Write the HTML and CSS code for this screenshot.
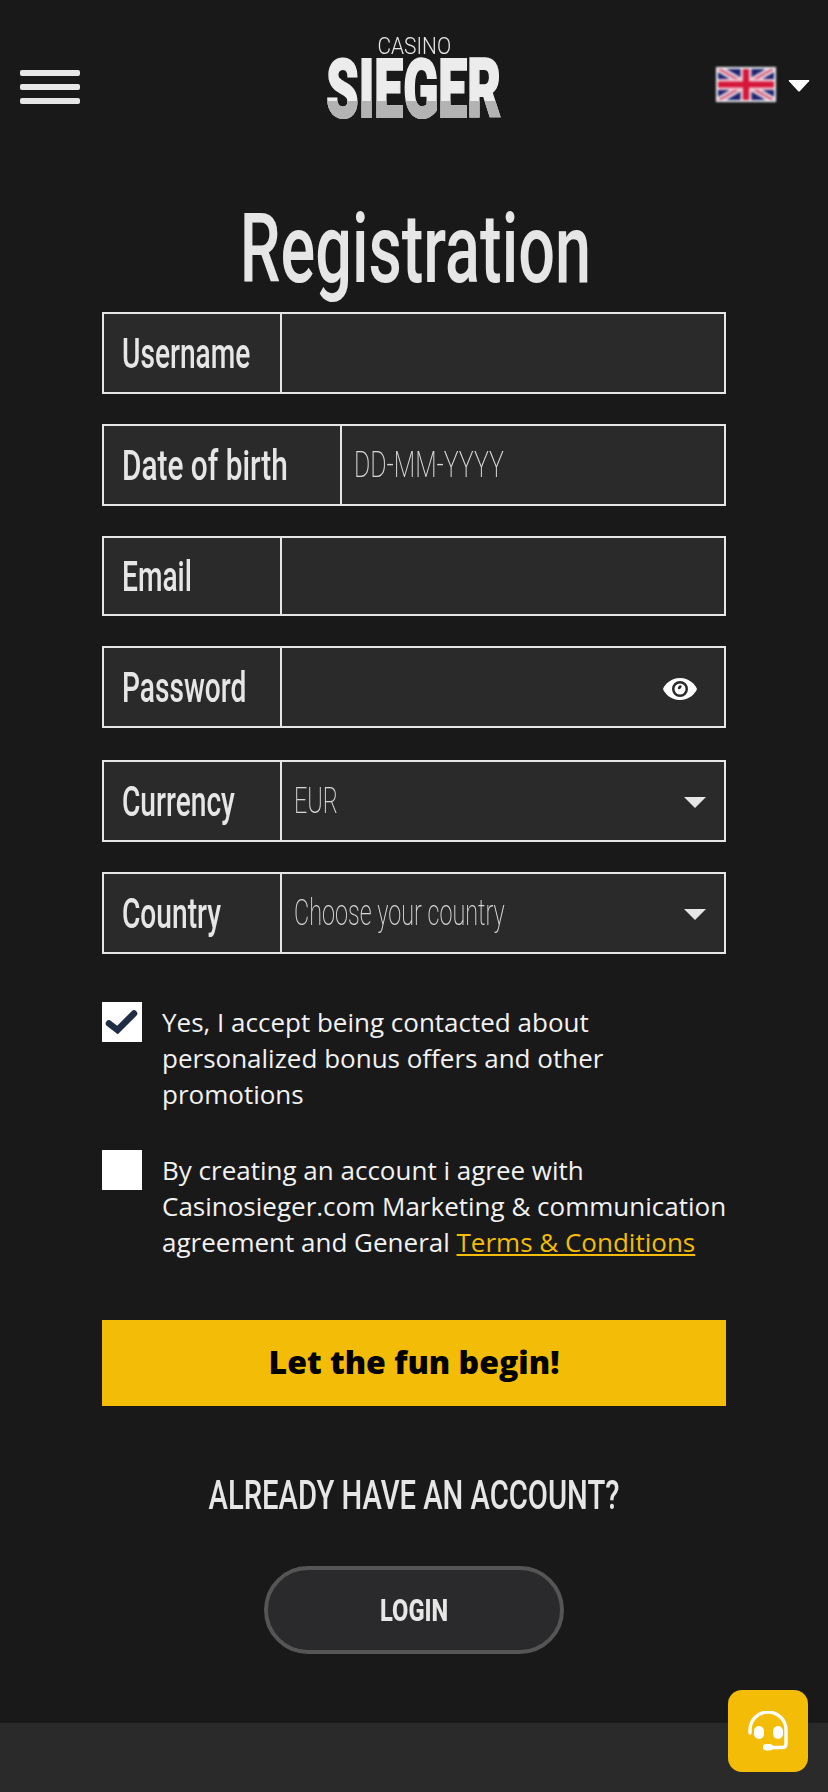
FILE: index.html
```html
<!DOCTYPE html>
<html lang="en">
<head>
<meta charset="utf-8">
<title>Casino Sieger - Registration</title>
<link rel="stylesheet" href="styles.css">
</head>
<body>
<div class="page">
  <header class="header">
    <button class="burger" aria-label="Menu"><i></i><i></i><i></i></button>
    <div class="logo">
      <span class="logo-casino">CASINO</span>
      <span class="logo-sieger" data-text="SIEGER">SIEGER</span>
    </div>
    <div class="lang">
      <svg class="flag" viewBox="0 0 60 35" width="60" height="35">
        <rect width="60" height="35" fill="#1d2470"/>
        <path d="M0 0L60 35M60 0L0 35" stroke="#ecd8e2" stroke-width="7"/>
        <path d="M0 0L60 35M60 0L0 35" stroke="#d4506e" stroke-width="2"/>
        <path d="M30 0V35M0 17.5H60" stroke="#f0c8d2" stroke-width="11"/>
        <path d="M30 0V35M0 17.5H60" stroke="#d5163a" stroke-width="6"/>
        <rect x="1" y="1" width="58" height="33" fill="none" stroke="#eef0f6" stroke-width="2"/>
      </svg>
      <svg class="caret-lang" viewBox="0 0 22 12" width="22" height="12"><path d="M1.5 0H20.5Q22 0 21 1.2L12 11Q11 12 10 11L1 1.2Q0 0 1.5 0Z" fill="#fff"/></svg>
    </div>
  </header>

  <h1 class="title">Registration</h1>

  <form class="form">
    <div class="field"><label class="field-label"><span class="squeeze">Username</span></label><input class="field-input" type="text"></div>
    <div class="field"><label class="field-label field-label-wide"><span class="squeeze squeeze-wide">Date of birth</span></label><span class="field-value"><span class="squeeze-light squeeze-date">DD-MM-YYYY</span></span></div>
    <div class="field field-short"><label class="field-label"><span class="squeeze">Email</span></label><input class="field-input" type="email"></div>
    <div class="field field-gap"><label class="field-label"><span class="squeeze">Password</span></label><input class="field-input" type="password">
      <svg class="eye" viewBox="0 0 34 22" width="34" height="22"><path fill-rule="evenodd" d="M17 0C26 0 32 6 34 11C32 16 26 22 17 22C8 22 2 16 0 11C2 6 8 0 17 0ZM17 3A8 8 0 1 0 17 19A8 8 0 1 0 17 3Z" fill="#fff"/><path fill-rule="evenodd" d="M17 5.5A5.5 5.5 0 1 0 17 16.5A5.5 5.5 0 1 0 17 5.5ZM18.5 7.5A2.8 2.8 0 0 0 15 11A2.8 2.8 0 0 0 18.5 7.5Z" fill="#fff"/></svg>
    </div>
    <div class="field"><label class="field-label"><span class="squeeze">Currency</span></label><span class="field-value"><span class="squeeze-light">EUR</span></span>
      <svg class="caret" viewBox="0 0 22 11" width="22" height="11"><path d="M0 0H22L11 11Z" fill="#e6e6e6"/></svg>
    </div>
    <div class="field"><label class="field-label"><span class="squeeze">Country</span></label><span class="field-value"><span class="squeeze-light">Choose your country</span></span>
      <svg class="caret" viewBox="0 0 22 11" width="22" height="11"><path d="M0 0H22L11 11Z" fill="#e6e6e6"/></svg>
    </div>

    <div class="checks">
      <div class="check-row">
        <span class="box"><svg viewBox="0 0 40 40" width="40" height="40"><path d="M7 21.5L15.5 28L32 11.5" fill="none" stroke="#1f2d45" stroke-width="6.5" stroke-linecap="round"/></svg></span>
        <p class="check-text">Yes, I accept being contacted about personalized bonus offers and other promotions</p>
      </div>
      <div class="check-row">
        <span class="box"></span>
        <p class="check-text">By creating an account i agree with Casinosieger.com Marketing &amp; communication agreement and General <a href="#">Terms &amp; Conditions</a></p>
      </div>
    </div>

    <button class="submit" type="button">Let the fun begin!</button>
  </form>

  <h2 class="already">ALREADY HAVE AN ACCOUNT?</h2>
  <a class="login" href="#"><span class="login-text">LOGIN</span></a>

  <footer class="footer"></footer>
  <button class="chat" aria-label="Support">
    <svg viewBox="0 0 40 40" width="40" height="40">
      <path d="M2 22V19A18 18 0 0 1 38 19V33Q38 36.5 34.5 36.5H20" fill="none" stroke="#fff" stroke-width="3.4" stroke-linecap="round"/>
      <rect x="6" y="15" width="10" height="13" rx="5" fill="#fff"/>
      <rect x="25" y="15" width="10" height="13" rx="5" fill="#fff"/>
      <rect x="15" y="33" width="10" height="6.5" rx="3.2" fill="#fff"/>
    </svg>
  </button>
</div>
</body>
</html>
```
FILE: styles.css
```css
* { box-sizing: border-box; }
html, body { margin: 0; padding: 0; }
body { background: #19191a; color: #e6e6e6; font-family: "Open Sans", sans-serif; }
.page { position: relative; width: 828px; height: 1792px; overflow: hidden; }

.header { display: grid; grid-template-columns: 1fr 172px 1fr; align-items: start; height: 199px; padding: 37px 18px 0 18px; }
.burger { display: flex; flex-direction: column; gap: 8px; width: 60px; margin: 33px 0 0 2px; padding: 0; background: none; border: 0; }
.burger i { display: block; height: 6px; background: #e6e6e6; border-radius: 2px; }

.logo { display: flex; flex-direction: column; align-items: center; width: 172px; white-space: nowrap; }
.logo-casino { display: inline-block; height: 22px; font-family: Roboto, sans-serif; font-weight: 300; font-size: 24px; line-height: 18px; color: #e6e6e6; transform: scaleX(.87); }
.logo-sieger { position: relative; display: inline-block; height: 61px; font-family: Roboto, sans-serif; font-weight: 900; font-size: 82px; line-height: 61px; color: #ececec; -webkit-text-stroke: 2px #ececec; transform: scaleX(.63); }
.logo-sieger::after { content: attr(data-text); position: absolute; left: 0; top: 0; color: #b3b3b3; -webkit-text-stroke: 2px #b3b3b3; clip-path: inset(42px -4px -4px -4px); }

.lang { display: flex; align-items: flex-start; justify-content: flex-end; gap: 12px; margin-top: 30px; }
.flag { display: block; filter: blur(.8px); }
.caret-lang { margin-top: 13px; }

.title { margin: 0; height: 113px; padding-left: 4px; font-family: Roboto, sans-serif; font-weight: 500; font-size: 96px; line-height: 100px; text-align: center; color: #e6e6e6; transform: scaleX(.675); }

.form { width: 624px; margin: 0 auto; }
.field { position: relative; display: flex; height: 82px; margin-bottom: 30px; background: #2a2a2b; border: 2px solid #e6e6e6; }
.field-short { height: 80px; }
.field-gap { margin-bottom: 32px; }
.field-label { display: flex; align-items: center; flex: 0 0 178px; min-width: 0; padding-left: 18px; border-right: 2px solid #e6e6e6; white-space: nowrap; font-family: Roboto, sans-serif; font-weight: 500; font-size: 42px; color: #e6e6e6; }
.field-label-wide { flex-basis: 238px; }
.squeeze { display: inline-block; transform-origin: left center; transform: scaleX(.67); }
.squeeze-wide { transform: scaleX(.71); }
.field-input { flex: 1; min-width: 0; padding: 0 12px; background: transparent; border: 0; outline: 0; color: #e6e6e6; font-size: 30px; }
.field-value { display: flex; align-items: center; flex: 1; min-width: 0; padding: 0 12px; white-space: nowrap; font-family: Roboto, sans-serif; font-weight: 200; font-size: 36px; color: #d8d8d8; }
.squeeze-light { display: inline-block; transform-origin: left center; transform: scaleX(.65); }
.squeeze-date { transform: scaleX(.69); }
.eye { position: absolute; right: 27px; top: 30px; }
.caret { position: absolute; right: 18px; top: 35px; }

.checks { display: flex; flex-direction: column; gap: 38px; padding-top: 18px; }
.check-row { display: flex; gap: 20px; }
.box { flex: 0 0 40px; height: 40px; background: #fff; }
.box svg { display: block; }
.check-text { margin: 0 -6px 0 0; padding-top: 2px; font-size: 26px; line-height: 36px; color: #f2f2f2; }
.check-text a { color: #f2bc07; }

.submit { display: block; width: 100%; height: 86px; margin-top: 60px; padding: 0 0 3px; background: #f2bc07; border: 0; color: #000; font-family: "Open Sans", sans-serif; font-weight: 800; font-size: 32px; }

.already { margin: 65px 0 0; font-family: Roboto, sans-serif; font-weight: 500; font-size: 40px; line-height: 50px; text-align: center; color: #e6e6e6; transform: scaleX(.73); }
.login { display: flex; align-items: center; justify-content: center; width: 300px; height: 88px; margin: 45px auto 0; background: #2a2a2c; border: 4px solid #555; border-radius: 44px; color: #e6e6e6; text-decoration: none; font-family: Roboto, sans-serif; font-weight: 800; font-size: 32px; }
.login-text { display: inline-block; transform: scaleX(.74); }

.footer { position: absolute; left: 0; right: 0; bottom: 0; height: 69px; background: #2a2a2b; }
.chat { position: absolute; left: 728px; top: 1690px; display: flex; align-items: center; justify-content: center; width: 80px; height: 82px; padding: 0; background: #f2bc07; border: 0; border-radius: 14px; }
.chat svg { display: block; }
```
